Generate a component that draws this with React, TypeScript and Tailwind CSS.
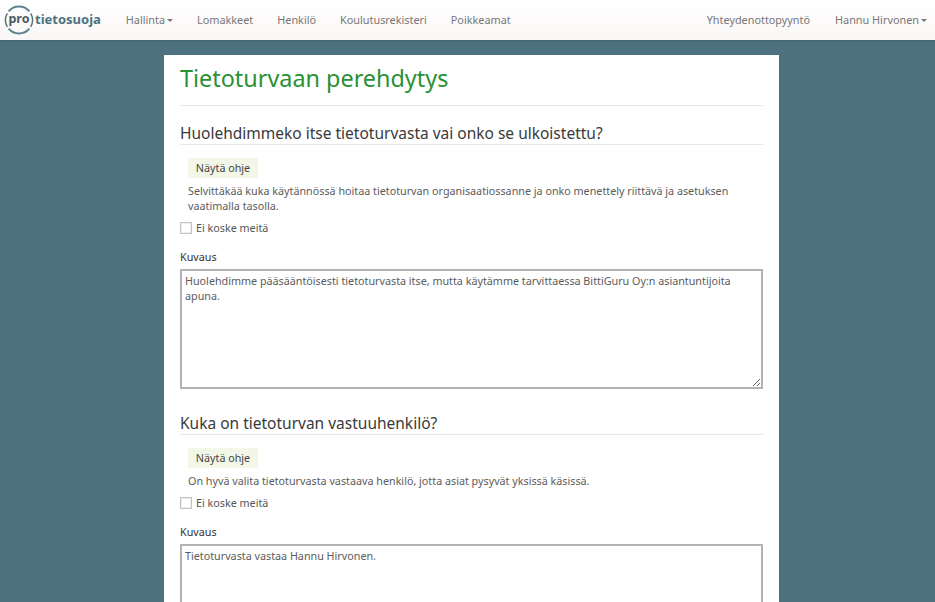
import { ChangeEvent } from "react";

const font = "font-['Noto_Sans',sans-serif]";

const navLink = "text-[10.85px] text-[#777] whitespace-nowrap";

const Caret = () => (
    <span className="inline-block ml-[2px] align-middle w-0 h-0 border-x-[3.5px] border-x-transparent border-t-[3.5px] border-t-[#777]" />
);

const Logo = () => (
    <div className="flex items-center ml-[4px]">
        <div className="relative w-[30px] h-[30px] flex items-center justify-center">
            <svg viewBox="0 0 30 30" className="absolute inset-0 w-[30px] h-[30px]" fill="none" strokeWidth="2">
                <path stroke="#5b8290" d="M4.66 6.32 A13.5 13.5 0 0 1 25.34 6.32" />
                <path stroke="#5b8290" d="M25.34 23.68 A13.5 13.5 0 0 1 4.66 23.68" />
                <path stroke="#5f7480" strokeWidth="1.5" d="M3.31 21.75 A13.5 13.5 0 0 1 3.31 8.25" />
                <path stroke="#5f7480" strokeWidth="1.5" d="M26.69 8.25 A13.5 13.5 0 0 1 26.69 21.75" />
            </svg>
            <span className="text-[12.5px] font-bold text-[#4a5a64] leading-none mt-[-2px]">pro</span>
        </div>
        <span className="ml-[1px] text-[13px] font-bold text-[#4c7280]">tietosuoja</span>
    </div>
);

const Navbar = () => (
    <div className="h-[40px] flex items-center justify-between bg-gradient-to-b from-white to-[#faf7f6] shadow-[0_1px_2px_rgba(0,0,0,0.15)] relative">
        <div className="flex items-center">
            <Logo />
            <div className="flex ml-[25px] gap-[24px]">
                <span className={navLink}>Hallinta<Caret /></span>
                <span className={navLink}>Lomakkeet</span>
                <span className={navLink}>Henkilö</span>
                <span className={navLink}>Koulutusrekisteri</span>
                <span className={navLink}>Poikkeamat</span>
            </div>
        </div>
        <div className="flex gap-[25px] mr-[8px]">
            <span className={navLink}>Yhteydenottopyyntö</span>
            <span className={navLink}>Hannu Hirvonen<Caret /></span>
        </div>
    </div>
);

type SectionProps = {
    title: string;
    help: string;
    text: string;
    helpHeight: string;
};

const Section = ({ title, help, text, helpHeight }: SectionProps) => (
    <div>
        <h2 className="text-[15.5px] leading-[18px] pb-[2px] text-[#3a3a3a] border-b border-[#e8e8e8]">{title}</h2>
        <div className="pl-[8px] mt-[13px]">
            <button className="block h-[20px] w-[70px] bg-[#f2f7e8] text-[10.75px] leading-[20px] text-[#444] text-center">Näytä ohje</button>
            <p className={`mt-[6px] text-[10.75px] leading-[15px] text-[#5c5c5c] ${helpHeight}`}>{help}</p>
        </div>
        <label className="flex items-center mt-[7px] h-[14px]">
            <span className="block w-[12px] h-[12px] border border-[#c4c4c4] bg-white shadow-[inset_0_0_0_1px_#eee]" />
            <span className="ml-[4px] mt-[1px] text-[10.75px] text-[#555]">Ei koske meitä</span>
        </label>
        <div className="mt-[15px] text-[10.75px] leading-[14px] text-[#333]">Kuvaus</div>
        <textarea
            className="block mt-[5px] w-full h-[120px] border-2 border-[#b3b3b3] px-[3px] pt-[3px] pb-[2px] text-[10.75px] leading-[15px] text-[#5c5c5c] outline-none"
            value={text}
            onChange={(_e: ChangeEvent<HTMLTextAreaElement>) => {}}
        />
    </div>
);

export default function App() {
    return (
        <div className={`h-[602px] w-[935px] overflow-hidden bg-[#4c7280] ${font}`}>
            <Navbar />
            <div className="mt-[15px] ml-[164px] w-[615px] bg-white px-[16px] pb-[20px]">
                <h1 className="pt-[7px] text-[23.4px] leading-[32px] text-[#2a9134] pb-[11px] border-b border-[#e8e8e8]">Tietoturvaan perehdytys</h1>
                <div className="mt-[18px]">
                    <Section
                        title="Huolehdimmeko itse tietoturvasta vai onko se ulkoistettu?"
                        help="Selvittäkää kuka käytännössä hoitaa tietoturvan organisaatiossanne ja onko menettely riittävä ja asetuksen vaatimalla tasolla."
                        helpHeight="h-[30px]"
                        text="Huolehdimme pääsääntöisesti tietoturvasta itse, mutta käytämme tarvittaessa BittiGuru Oy:n asiantuntijoita apuna."
                    />
                </div>
                <div className="mt-[25px]">
                    <Section
                        title="Kuka on tietoturvan vastuuhenkilö?"
                        help="On hyvä valita tietoturvasta vastaava henkilö, jotta asiat pysyvät yksissä käsissä."
                        helpHeight="h-[15px]"
                        text="Tietoturvasta vastaa Hannu Hirvonen."
                    />
                </div>
            </div>
        </div>
    );
}
